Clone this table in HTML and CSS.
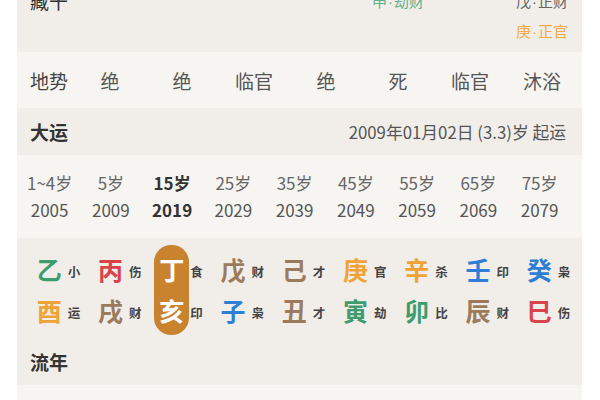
FILE: index.html
```html
<!DOCTYPE html>
<html lang="zh-CN">
<head>
<meta charset="utf-8">
<title>八字排盘</title>
<link rel="stylesheet" href="styles.css">
</head>
<body>
<div class="card">
  <section class="zang">
    <span class="label">藏干</span>
    <span></span><span></span><span></span><span></span>
    <span class="zg green">申<span class="dot">·</span>劫财</span>
    <span></span>
    <span class="zg gray">戊<span class="dot">·</span>正财</span>
    <span></span><span></span><span></span><span></span><span></span><span></span><span></span>
    <span class="zg orange">庚<span class="dot">·</span>正官</span>
  </section>

  <section class="dishi">
    <span class="label-light">地势</span>
    <span>绝</span><span>绝</span><span>临官</span><span>绝</span><span>死</span><span>临官</span><span>沐浴</span>
  </section>

  <section class="head">
    <span class="title">大运</span>
    <span class="qiyun">2009年01月02日 (3.3)岁 起运</span>
  </section>

  <section class="ages">
    <span class="age">1~4岁</span><span class="age">5岁</span><span class="age cur">15岁</span><span class="age">25岁</span><span class="age">35岁</span><span class="age">45岁</span><span class="age">55岁</span><span class="age">65岁</span><span class="age">75岁</span>
    <span class="year">2005</span><span class="year">2009</span><span class="year cur">2019</span><span class="year">2029</span><span class="year">2039</span><span class="year">2049</span><span class="year">2059</span><span class="year">2069</span><span class="year">2079</span>
  </section>

  <section class="pillars-block">
    <div class="pillars">
      <div class="pcol"><div class="stack"><span class="big green">乙</span><span class="big orange">酉</span></div><span class="sub s1">小</span><span class="sub s2">运</span></div>
      <div class="pcol"><div class="stack"><span class="big red">丙</span><span class="big brown">戌</span></div><span class="sub s1">伤</span><span class="sub s2">财</span></div>
      <div class="pcol"><div class="stack active"><span class="big">丁</span><span class="big">亥</span></div><span class="sub s1">食</span><span class="sub s2">印</span></div>
      <div class="pcol"><div class="stack"><span class="big brown">戊</span><span class="big blue">子</span></div><span class="sub s1">财</span><span class="sub s2">枭</span></div>
      <div class="pcol"><div class="stack"><span class="big brown">己</span><span class="big brown">丑</span></div><span class="sub s1">才</span><span class="sub s2">才</span></div>
      <div class="pcol"><div class="stack"><span class="big orange">庚</span><span class="big green">寅</span></div><span class="sub s1">官</span><span class="sub s2">劫</span></div>
      <div class="pcol"><div class="stack"><span class="big orange">辛</span><span class="big green">卯</span></div><span class="sub s1">杀</span><span class="sub s2">比</span></div>
      <div class="pcol"><div class="stack"><span class="big blue">壬</span><span class="big brown">辰</span></div><span class="sub s1">印</span><span class="sub s2">财</span></div>
      <div class="pcol"><div class="stack"><span class="big blue">癸</span><span class="big red">巳</span></div><span class="sub s1">枭</span><span class="sub s2">伤</span></div>
    </div>
    <div class="head sub-head">
      <span class="title">流年</span>
    </div>
  </section>
  <section class="tail"></section>
</div>
</body>
</html>
```

FILE: styles.css
```css
* { box-sizing: border-box; }

html, body {
  margin: 0;
  padding: 0;
  background: #ffffff;
  overflow: hidden;
}

body {
  font-family: "Noto Sans CJK SC", "Noto Sans", sans-serif;
  color: #444;
}

.card {
  margin: -16px 0 0 17px;
  width: 565px;
}

/* 藏干 */
.zang {
  display: grid;
  grid-template-columns: 44px repeat(7, 72px);
  grid-auto-rows: 30px;
  align-items: center;
  justify-items: center;
  padding: 1px 0 7px 13px;
  background: #f1eee9;
}

.zang .label {
  justify-self: start;
  font-size: 19px;
  color: #333;
  white-space: nowrap;
}

.zg {
  font-size: 15px;
  white-space: nowrap;
}

.dot {
  font-family: "Liberation Sans", sans-serif;
  margin: 0 1px;
}

.green { color: #3e9c6f; }
.gray { color: #666; }
.orange { color: #f0a236; }
.red { color: #d8434b; }
.brown { color: #9b7b5c; }
.blue { color: #2f7ed5; }

.zg.green { color: #62b08a; }
.zg.orange { color: #f2aa4a; }

/* 地势 */
.dishi {
  display: grid;
  grid-template-columns: 44px repeat(7, 72px);
  height: 56px;
  align-items: center;
  justify-items: center;
  padding-left: 13px;
  background: #f6f5f2;
  font-size: 19px;
  color: #555;
}

.dishi .label-light {
  justify-self: start;
  white-space: nowrap;
  color: #444;
}

/* headers */
.head {
  display: flex;
  justify-content: space-between;
  align-items: center;
  height: 47px;
  padding: 0 16px 0 13px;
  background: #f1eee9;
}

.title {
  font-size: 19px;
  font-weight: 700;
  color: #333;
}

.qiyun {
  font-size: 16.8px;
  color: #555;
  white-space: nowrap;
}

/* 大运年龄 */
.ages {
  display: grid;
  grid-template-columns: repeat(9, 61.25px);
  grid-auto-rows: 27px;
  align-items: center;
  justify-items: center;
  padding: 14px 0 15px 2px;
  background: #f6f5f2;
  font-size: 17px;
  white-space: nowrap;
}

.age { color: #666; }
.year { color: #555; }
.cur { color: #333; font-weight: 700; }

/* 干支 */
.pillars-block {
  background: #f1eee9;
  padding-top: 11px;
}

.pillars {
  display: grid;
  grid-template-columns: repeat(9, 61.25px);
  padding-left: 2px;
}

.pcol {
  display: grid;
  grid-template-columns: 1fr auto 1fr;
  grid-template-rows: 41px 41px;
}

.stack {
  grid-column: 2;
  grid-row: 1 / 3;
  display: flex;
  flex-direction: column;
}

.stack.active {
  background: #c9832f;
  border-radius: 17px;
  padding: 4px 5px;
  margin: -4px -5px;
}

.stack.active .big { color: #fff; }

.big {
  height: 41px;
  display: flex;
  align-items: center;
  justify-content: center;
  font-size: 25px;
  font-weight: 700;
  line-height: 1;
}

.sub {
  grid-column: 3;
  justify-self: start;
  align-self: center;
  margin: 6px 0 0 6px;
  font-size: 12.5px;
  font-weight: 700;
  color: #444;
  line-height: 1;
}

.s1 { grid-row: 1; }
.s2 { grid-row: 2; }

.sub-head {
  margin-top: 7px;
}

.tail {
  height: 15px;
  background: #f6f5f2;
}
```
